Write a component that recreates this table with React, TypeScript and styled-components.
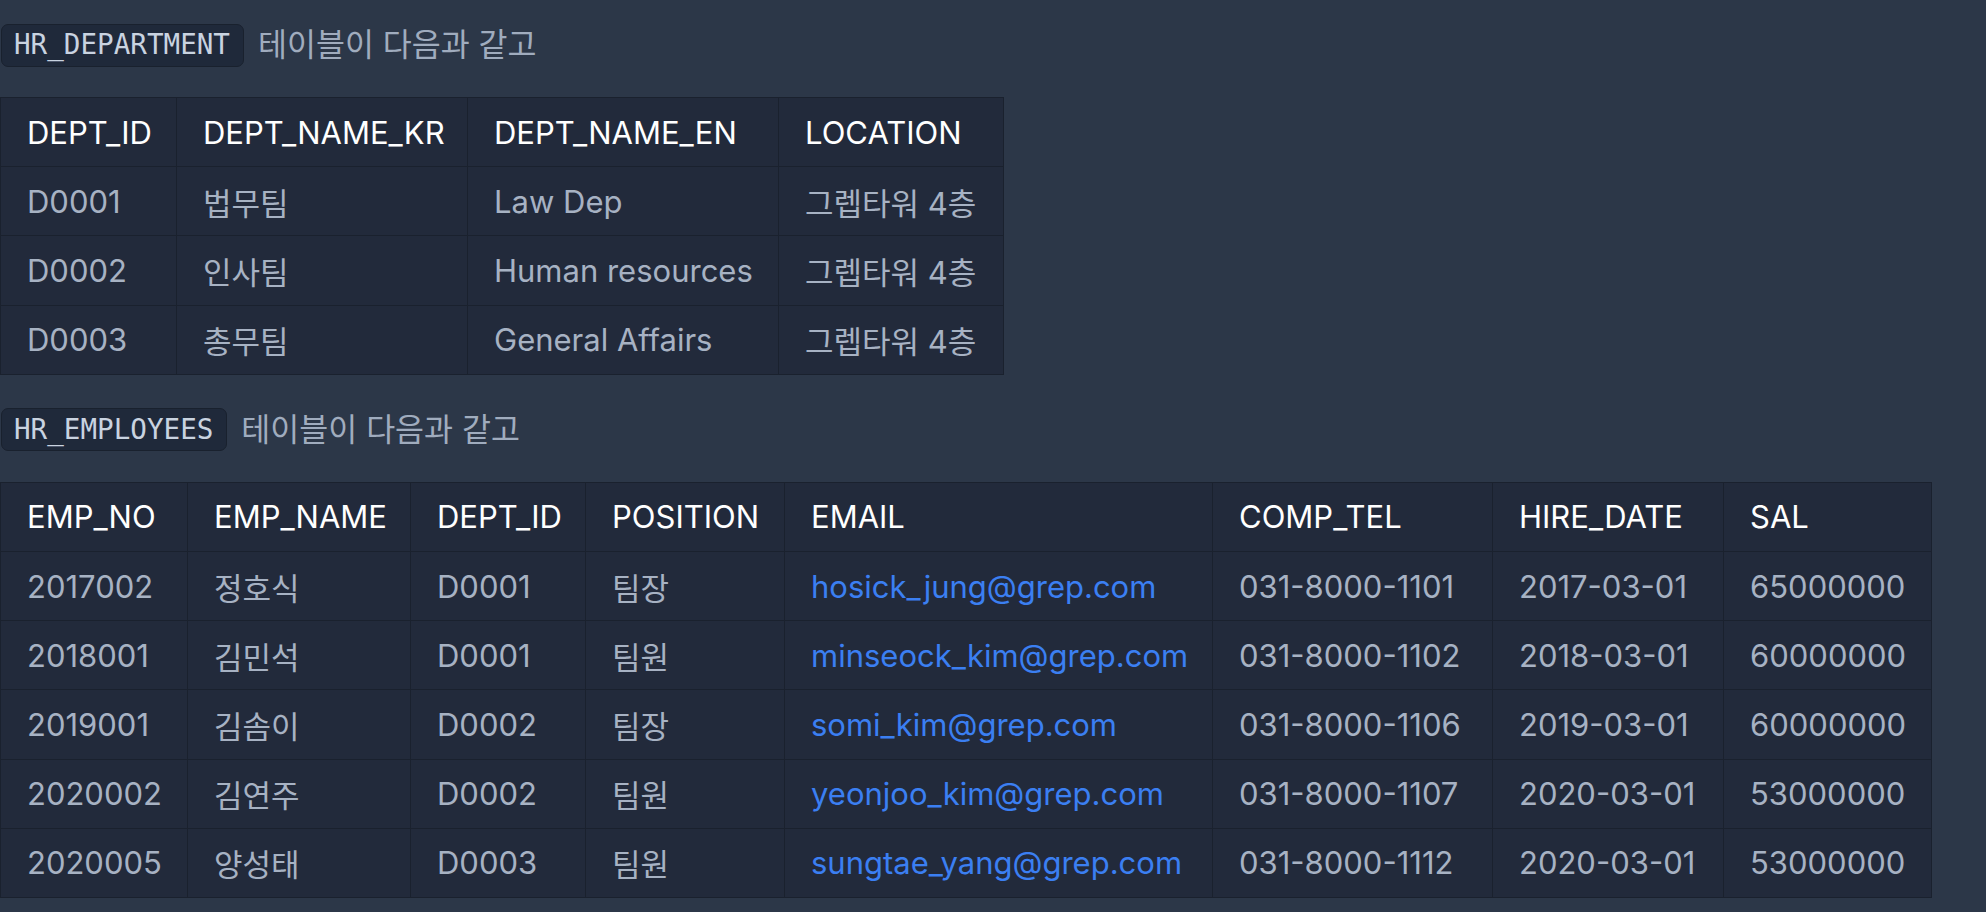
import React from 'react'
import styled, { createGlobalStyle } from 'styled-components'

const GlobalStyle = createGlobalStyle`
  html, body {
    margin: 0;
    padding: 0;
    background: #2c3748;
  }
  body {
    font-family: Inter, "Noto Sans CJK KR", sans-serif;
    -webkit-font-smoothing: antialiased;
  }
`

const Page = styled.div`
  display: flex;
  flex-direction: column;
  align-items: flex-start;
`

const Caption = styled.p`
  display: flex;
  align-items: center;
  gap: 14px;
  height: 44px;
  margin: 23px 0 30px;
  line-height: 1;
  font-family: Inter, "Noto Sans CJK KR", sans-serif;
  font-size: 31.5px;
  color: #a0acbe;
`

const Code = styled.code`
  display: inline-flex;
  align-items: center;
  height: 43px;
  box-sizing: border-box;
  padding: 0 13px 0 12px;
  margin-left: 1px;
  background: #1f293a;
  border: 1px solid #19212e;
  border-radius: 7px;
  font-family: "DejaVu Sans Mono", monospace;
  font-size: 27.6px;
  font-weight: 400;
  color: #c9d3e0;
`

const Table = styled.table<{ $width: number }>`
  width: ${({ $width }) => $width}px;
  table-layout: fixed;
  border-collapse: collapse;
  margin-bottom: 10px;
  background: #222a3b;
  border: 1px solid #1a212e;
`

const Col = styled.col<{ $w: number }>`
  width: ${({ $w }) => $w}px;
`

const Cell = styled.td<{ $head?: boolean; $link?: boolean }>`
  height: 69.2px;
  box-sizing: border-box;
  padding: 0 0 0 26px;
  border: 1px solid #1a212e;
  white-space: nowrap;
  text-align: left;
  font-weight: 400;
  font-family: Inter, "Noto Sans CJK KR", sans-serif;
  font-size: 31px;
  color: ${({ $head, $link }) => ($head ? '#ffffff' : $link ? '#3b7ff2' : '#a7b2c3')};
`

type TableData = {
  name: string
  widths: number[]
  head: string[]
  rows: string[][]
  linkCol?: number
}

const department: TableData = {
  name: 'HR_DEPARTMENT',
  widths: [176, 291, 311, 225],
  head: ['DEPT_ID', 'DEPT_NAME_KR', 'DEPT_NAME_EN', 'LOCATION'],
  rows: [
    ['D0001', '법무팀', 'Law Dep', '그렙타워 4층'],
    ['D0002', '인사팀', 'Human resources', '그렙타워 4층'],
    ['D0003', '총무팀', 'General Affairs', '그렙타워 4층'],
  ],
}

const employees: TableData = {
  name: 'HR_EMPLOYEES',
  widths: [187, 223, 175, 199, 428, 280, 231, 208],
  head: ['EMP_NO', 'EMP_NAME', 'DEPT_ID', 'POSITION', 'EMAIL', 'COMP_TEL', 'HIRE_DATE', 'SAL'],
  linkCol: 4,
  rows: [
    ['2017002', '정호식', 'D0001', '팀장', 'hosick_jung@grep.com', '031-8000-1101', '2017-03-01', '65000000'],
    ['2018001', '김민석', 'D0001', '팀원', 'minseock_kim@grep.com', '031-8000-1102', '2018-03-01', '60000000'],
    ['2019001', '김솜이', 'D0002', '팀장', 'somi_kim@grep.com', '031-8000-1106', '2019-03-01', '60000000'],
    ['2020002', '김연주', 'D0002', '팀원', 'yeonjoo_kim@grep.com', '031-8000-1107', '2020-03-01', '53000000'],
    ['2020005', '양성태', 'D0003', '팀원', 'sungtae_yang@grep.com', '031-8000-1112', '2020-03-01', '53000000'],
  ],
}

const DataTable: React.FC<{ data: TableData }> = ({ data }) => (
  <>
    <Caption>
      <Code>{data.name}</Code>
      <span>테이블이 다음과 같고</span>
    </Caption>
    <Table $width={data.widths.reduce((a, b) => a + b, 0)}>
      <colgroup>
        {data.widths.map((w, i) => (
          <Col key={i} $w={w} />
        ))}
      </colgroup>
      <thead>
        <tr>
          {data.head.map((h) => (
            <Cell as="th" key={h} $head>
              {h}
            </Cell>
          ))}
        </tr>
      </thead>
      <tbody>
        {data.rows.map((row, r) => (
          <tr key={r}>
            {row.map((v, c) => (
              <Cell key={c} $link={c === data.linkCol}>
                {v}
              </Cell>
            ))}
          </tr>
        ))}
      </tbody>
    </Table>
  </>
)

const App: React.FC = () => (
  <>
    <GlobalStyle />
    <Page>
      <DataTable data={department} />
      <DataTable data={employees} />
    </Page>
  </>
)

export default App
